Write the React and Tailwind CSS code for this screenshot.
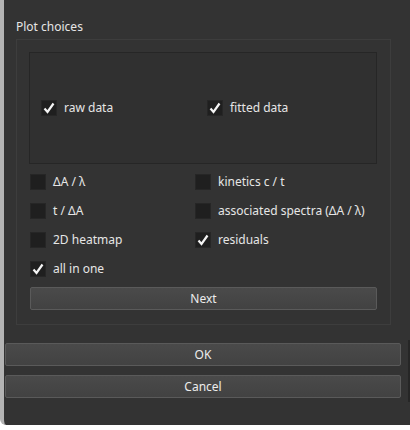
const font = { fontFamily: '"Noto Sans", "Open Sans", sans-serif' };

function Check({ checked }) {
  return (
    <span className="w-4 h-4 bg-[#1f1f1f] border border-[#262626] flex items-center justify-center shrink-0">
      {checked && (
        <svg width="14" height="14" viewBox="0 0 14 14">
          <path d="M2.5 7.5 L5.5 11 L11.5 2.5" fill="none" stroke="#f4f4f4" strokeWidth="2.2" strokeLinecap="butt" />
        </svg>
      )}
    </span>
  );
}

function Option({ label, checked, className = "" }) {
  return (
    <div className={`flex items-center gap-[7px] h-4 ${className}`}>
      <Check checked={checked} />
      <span className="text-[12px] text-[#e6e6e6] leading-4 whitespace-nowrap">{label}</span>
    </div>
  );
}

function Button({ children, className = "" }) {
  return (
    <div
      className={`flex items-center justify-center text-[12px] text-[#ececec] bg-gradient-to-b from-[#4a4a4a] to-[#424242] border border-[#5a5a5a] rounded-[2px] ${className}`}
    >
      {children}
    </div>
  );
}

export default function App() {
  return (
    <div className="w-[410px] h-[430px] bg-white" style={font}>
      <div className="w-[410px] h-[425px] bg-[#333333] border-l-[4px] border-[#b4b4b4] rounded-bl-[6px] pt-[19px] relative">
        <div className="ml-[12px] text-[12px] text-[#e6e6e6] leading-4">Plot choices</div>
        <div className="ml-[12px] mt-[4px] w-[375px] h-[286px] border border-[#3d3d3d] pt-[12px] pl-[12px]">
          <div className="w-[348px] h-[112px] border border-[#262626] bg-[#303030] pt-[47px] pl-[11px] flex">
            <Option label="raw data" checked className="w-[166px]" />
            <Option label="fitted data" checked />
          </div>
          <div className="grid grid-cols-[165px_1fr] gap-y-[13px] mt-[10px] ml-px">
            <Option label="ΔA / λ" />
            <Option label="kinetics c / t" />
            <Option label="t / ΔA" />
            <Option label="associated spectra (ΔA / λ)" />
            <Option label="2D heatmap" />
            <Option label="residuals" checked />
            <Option label="all in one" checked />
          </div>
          <Button className="mt-[10px] ml-px w-[347px] h-[23px]">Next</Button>
        </div>
        <Button className="mt-[18px] ml-px w-[396px] h-[23px]">OK</Button>
        <Button className="mt-[9px] ml-px w-[396px] h-[23px]">Cancel</Button>
        <div className="absolute right-0 top-[340px] w-[2px] h-[62px] bg-[#262626]" />
      </div>
    </div>
  );
}
